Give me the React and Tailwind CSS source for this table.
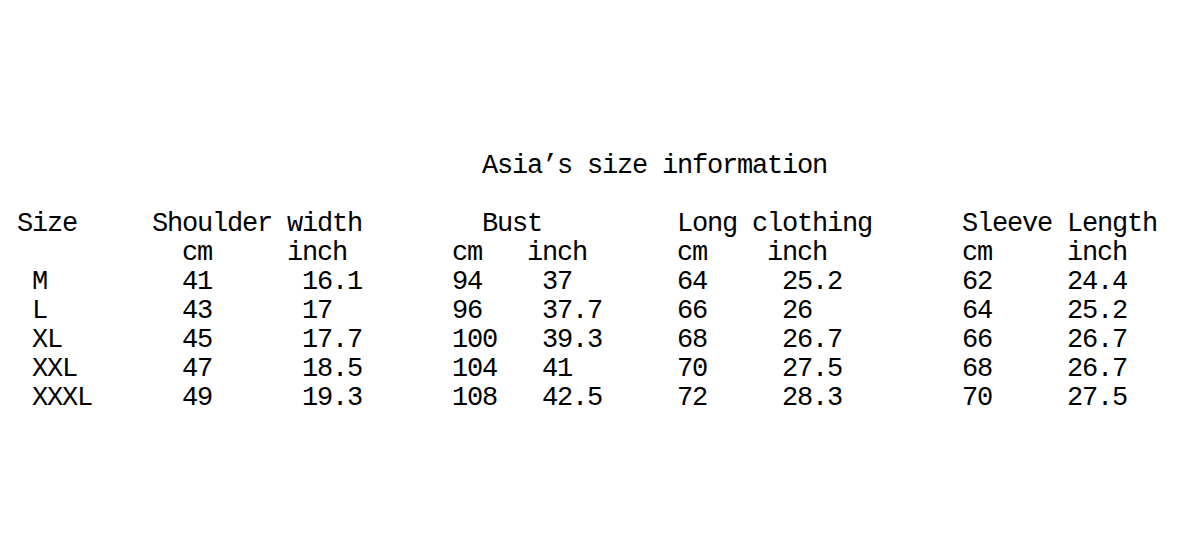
const rows = [
    ["M", "41", "16.1", "94", "37", "64", "25.2", "62", "24.4"],
    ["L", "43", "17", "96", "37.7", "66", "26", "64", "25.2"],
    ["XL", "45", "17.7", "100", "39.3", "68", "26.7", "66", "26.7"],
    ["XXL", "47", "18.5", "104", "41", "70", "27.5", "68", "26.7"],
    ["XXXL", "49", "19.3", "108", "42.5", "72", "28.3", "70", "27.5"],
];

// each cell sits on a 15px character grid
const dataCols = [
    "col-start-2",
    "col-start-12",
    "col-start-20",
    "col-start-30",
    "col-start-36",
    "col-start-45",
    "col-start-52",
    "col-start-64",
    "col-start-71",
];

const headers = [
    { text: "Size", col: "col-start-1" },
    { text: "Shoulder width", col: "col-start-10" },
    { text: "Bust", col: "col-start-32" },
    { text: "Long clothing", col: "col-start-45" },
    { text: "Sleeve Length", col: "col-start-64" },
];

const units = [
    { text: "cm", col: "col-start-12" },
    { text: "inch", col: "col-start-19" },
    { text: "cm", col: "col-start-30" },
    { text: "inch", col: "col-start-35" },
    { text: "cm", col: "col-start-45" },
    { text: "inch", col: "col-start-51" },
    { text: "cm", col: "col-start-64" },
    { text: "inch", col: "col-start-71" },
];

const Row = ({ children }) => (
    <div className="grid grid-cols-[repeat(76,15px)] h-[29px]">{children}</div>
);

const Cell = ({ col, children }) => (
    <div className={`${col} whitespace-nowrap`}>{children}</div>
);

export default function App() {
    return (
        <div className="w-[1179px] h-[549px] bg-white text-black overflow-hidden pt-[152px] pl-[17px] font-['Liberation_Mono',monospace] text-[27px] leading-[29px] tracking-[-1.2px]">
            <Row>
                <Cell col="col-start-32">Asia’s size information</Cell>
            </Row>
            <Row />
            <Row>
                {headers.map((h) => (
                    <Cell key={h.text} col={h.col}>{h.text}</Cell>
                ))}
            </Row>
            <Row>
                {units.map((u, i) => (
                    <Cell key={i} col={u.col}>{u.text}</Cell>
                ))}
            </Row>
            {rows.map((r) => (
                <Row key={r[0]}>
                    {r.map((v, i) => (
                        <Cell key={i} col={dataCols[i]}>{v}</Cell>
                    ))}
                </Row>
            ))}
        </div>
    );
}
